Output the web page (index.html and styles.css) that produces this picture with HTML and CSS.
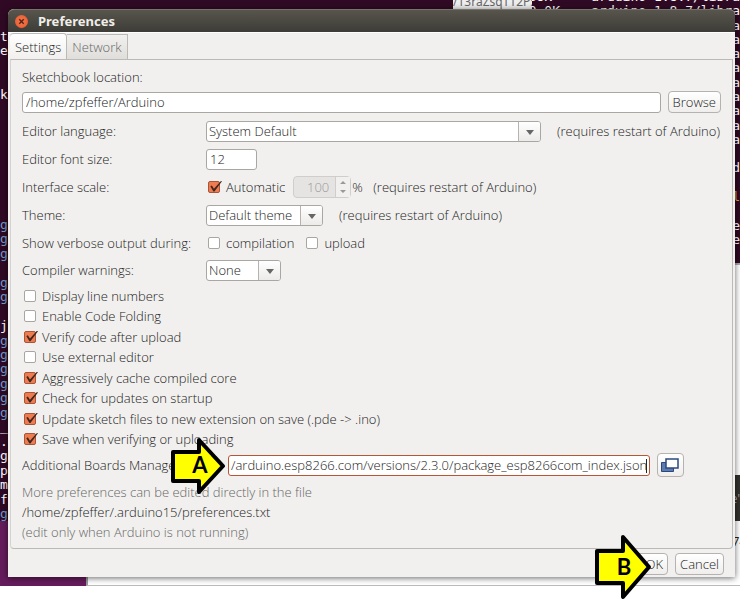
FILE: index.html
```html
<!DOCTYPE html>
<html lang="en">
<head>
<meta charset="utf-8">
<title>Preferences</title>
<link rel="stylesheet" href="styles.css">
</head>
<body>
<div class="desktop">
  <div class="terminal terminal-left">
    <span>t</span><span>e</span><span></span><span></span><span>k</span><span></span><span></span><span></span><span></span><span></span><span></span><span></span><span></span><span class="dir">g</span><span class="dir">g</span><span class="dir">g</span><span></span><span class="dir">g</span><span class="dir">g</span><span></span><span>j</span><span class="dir">g</span><span class="dir">g</span><span class="dir">g</span><span class="dir">g</span><span class="dir">g</span><span class="dir">g</span><span>_</span><span>.</span><span>g</span><span>p</span><span>m</span><span>f</span><span class="dir">g</span>
  </div>
  <div class="back-window"></div>
  <div class="terminal terminal-right">
    <span>SOK     arduino-1.8.7/libra</span><span>0.0K    arduino-1.8.7/libra</span><span>a</span><span>a</span><span>a</span><span>a</span><span>a</span><span>a</span><span>a</span><span>a</span><span>a</span><span></span><span>d</span><span></span><span class="warn">l</span><span></span><span>e</span><span>e</span>
  </div>
  <div class="tooltip-edge">/13raZsqT12PS</div>
  <div class="dark-edge">e'</div>
  <div class="number-edge">74</div>

  <main class="dialog">
    <header class="titlebar">
      <button class="close" type="button" aria-label="Close"><svg viewBox="0 0 14 14"><path d="M4.6 4.6l4.8 4.8M9.4 4.6l-4.8 4.8"/></svg></button>
      <h1>Preferences</h1>
    </header>
    <nav class="tabs">
      <button class="tab active" type="button">Settings</button>
      <button class="tab" type="button">Network</button>
    </nav>
    <form class="panel">
      <label class="heading" for="sketchbook">Sketchbook location:</label>
      <div class="location">
        <input class="text" id="sketchbook" type="text" value="/home/zpfeffer/Arduino">
        <button class="btn" type="button">Browse</button>
      </div>
      <div class="row">
        <label class="name" for="language">Editor language:</label>
        <div class="combo language"><select id="language"><option>System Default</option></select></div>
        <span class="hint">(requires restart of Arduino)</span>
      </div>
      <div class="row">
        <label class="name" for="size">Editor font size:</label>
        <input class="text size" id="size" type="text" value="12">
      </div>
      <div class="row">
        <span class="name">Interface scale:</span>
        <label class="check"><input type="checkbox" checked>Automatic</label>
        <div class="spinner">
          <input type="text" value="100" aria-label="Interface scale" disabled>
          <svg viewBox="0 0 14 20"><path d="M4 7l3-3 3 3zM4 13l3 3 3-3z"/></svg>
        </div>
        <span class="percent">%</span>
        <span>(requires restart of Arduino)</span>
      </div>
      <div class="row">
        <label class="name" for="theme">Theme:</label>
        <div class="combo theme"><select id="theme"><option>Default theme</option></select></div>
        <span class="hint">(requires restart of Arduino)</span>
      </div>
      <div class="row">
        <span class="name">Show verbose output during:</span>
        <label class="check"><input type="checkbox">compilation</label>
        <label class="check second"><input type="checkbox">upload</label>
      </div>
      <div class="row short">
        <label class="name" for="warnings">Compiler warnings:</label>
        <div class="combo warnings"><select id="warnings"><option>None</option></select></div>
      </div>
      <div class="checks">
        <label class="check"><input type="checkbox">Display line numbers</label>
        <label class="check"><input type="checkbox">Enable Code Folding</label>
        <label class="check"><input type="checkbox" checked>Verify code after upload</label>
        <label class="check"><input type="checkbox">Use external editor</label>
        <label class="check"><input type="checkbox" checked>Aggressively cache compiled core</label>
        <label class="check"><input type="checkbox" checked>Check for updates on startup</label>
        <label class="check"><input type="checkbox" checked>Update sketch files to new extension on save (.pde -&gt; .ino)</label>
        <label class="check"><input type="checkbox" checked>Save when verifying or uploading</label>
      </div>
      <div class="boards">
        <label for="boards">Additional Boards Manager URLs:</label>
        <div class="caret-field"><input class="text" id="boards" type="text" value="/arduino.esp8266.com/versions/2.3.0/package_esp8266com_index.json"></div>
        <button class="btn expand" type="button" aria-label="Edit URLs"><svg viewBox="0 0 20 16"><path class="rear" d="M1.5 5.500h12v9h-12z"/><path class="front" d="M6 2h12v9H6z"/></svg></button>
      </div>
      <div class="notes">
        <p>More preferences can be edited directly in the file</p>
        <p class="path">/home/zpfeffer/.arduino15/preferences.txt</p>
        <p>(edit only when Arduino is not running)</p>
      </div>
    </form>
    <footer class="actions">
      <button class="btn ok" type="button">OK</button>
      <button class="btn" type="button">Cancel</button>
    </footer>
  </main>

  <svg class="arrow arrow-a" viewBox="0 0 58 60"><path d="M4 16h26V4l24 26-24 26V45H4z"/><text x="31" y="37">A</text></svg>
  <svg class="arrow arrow-b" viewBox="0 0 60 68"><path d="M4 18h26V4l26 30-26 30V50H4z"/><text x="31" y="42">B</text></svg>
</div>
</body>
</html>
```

FILE: styles.css
```css
* { box-sizing: border-box; }
body {
  margin: 0;
  min-height: 100vh;
  background: #fff;
  color: #222;
  font: 300 13px/20px "Open Sans", "Noto Sans", sans-serif;
}
button, input, select { font: inherit; color: inherit; margin: 0; }

/* desktop behind the dialog */
.desktop {
  position: relative;
  padding: 9px 5px 9px 8px;
  background: #651c5c;
}
.terminal {
  position: absolute;
  display: flex;
  flex-direction: column;
  justify-content: space-between;
  background: #300a24;
  color: #fff;
  font: 13px/14px "DejaVu Sans Mono", monospace;
  white-space: pre;
}
.terminal span { height: 14px; }
.terminal .dir { color: #729fcf; }
.terminal .warn { color: #e9a33c; }
.terminal-left { left: 0; top: 0; width: 100%; height: 521px; padding-top: 30px; }
.terminal-right { right: 0; top: -10px; width: 240px; height: 275px; padding-bottom: 16px; border-bottom: 2px solid #aaa; align-items: flex-end; }
.back-window { position: absolute; left: 86px; right: 0; top: 265px; bottom: 0; background: #fff; border-left: 2px solid #999; border-bottom: 1px solid #bbb; }
.tooltip-edge { position: absolute; left: 453px; top: -8px; width: 79px; height: 17px; background: #eee; color: #666; font: 12px/20px "Noto Sans", sans-serif; overflow: hidden; }
.dark-edge { position: absolute; right: 0; top: 475px; width: 20px; height: 46px; background: #33322e; color: #ddd; text-align: right; line-height: 46px; }
.number-edge { position: absolute; right: 0; top: 531px; width: 8px; overflow: hidden; font-weight: 400; }

/* dialog */
.dialog { position: relative; background: #f1f0ee; border-radius: 6px 6px 0 0; box-shadow: 0 1px 6px rgba(0, 0, 0, .6); }
.titlebar {
  display: flex;
  align-items: center;
  gap: 10px;
  height: 23px;
  padding: 0 7px;
  border-top: 1px solid #75736b;
  border-radius: 6px 6px 0 0;
  background: linear-gradient(#57554c, #3d3c37);
}
.titlebar h1 { margin: 0; color: #f0eee8; font: 700 13px/20px "Noto Sans", sans-serif; }
.close { width: 13px; height: 13px; padding: 0; border: 0; border-radius: 50%; background: radial-gradient(#f37a4d, #e9552d); }
.close svg { display: block; width: 13px; height: 13px; fill: none; stroke: #552211; stroke-width: 1.5; }
.tabs { display: flex; align-items: flex-end; height: 27px; padding-left: 2px; border-top: 1px solid #fff; }
.tab { height: 25px; padding: 0 5px; border: 1px solid #bcbab7; border-left: 0; border-bottom: 0; background: linear-gradient(#f1f0ee, #dfdedb); color: #666; }
.tab.active { height: 26px; background: linear-gradient(#fff, #f1f0ee); color: inherit; border-radius: 4px 4px 0 0; }
.panel { margin: 0 2px; padding: 7px 11px 6px; border: 1px solid #bcbab7; border-left-color: #d5d3d0; border-radius: 0 0 4px 4px; }
.heading { display: block; }
.location { display: flex; align-items: center; gap: 7px; margin: 4px 0; }
.text { min-width: 0; height: 21px; padding: 0 3px; border: 1px solid #aaa7a3; border-radius: 3px; background: #fff; outline: 0; }
.location .text { flex: 1; }
.btn { height: 22px; padding: 0 4px; border: 1px solid #b5b2af; border-radius: 4px; background: linear-gradient(#fff, #efeeec); line-height: 18px; }
.row { display: flex; align-items: center; height: 28px; white-space: nowrap; }
.row.short { height: 26px; }
.name { flex: none; width: 184px; }
.hint { margin-left: 16px; }
.combo { position: relative; height: 21px; border: 1px solid #aaa7a3; border-radius: 3px; background: #fff; }
.combo select { display: block; width: 100%; height: 19px; padding: 0 22px 0 2px; border: 0; background: none; appearance: none; outline: 0; line-height: 18px; }
.combo::before { content: ""; position: absolute; inset: 0 0 0 auto; width: 21px; border-left: 1px solid #b5b2af; border-radius: 0 2px 2px 0; background: linear-gradient(#fff, #ecebe9); pointer-events: none; }
.combo::after { content: ""; position: absolute; right: 6px; top: 8px; border: 4px solid transparent; border-top: 5px solid #666; border-bottom: 0; pointer-events: none; }
.language { flex: 1; max-width: 335px; }
.theme { width: 117px; }
.warnings { width: 75px; }
.size { width: 51px; }
.check { display: flex; align-items: center; gap: 6px; padding-left: 2px; white-space: nowrap; }
.check.second { margin-left: 10px; }
.check input { position: relative; flex: none; width: 12px; height: 12px; border: 1px solid #a9a6a2; border-radius: 2px; background: #fff; appearance: none; }
.check input:checked { border-color: #a8553a; background: #ef7c50; }
.check input:checked::after { content: ""; position: absolute; left: 0; top: -1px; width: 13px; height: 11px; background: #40271e; clip-path: polygon(10% 48%, 22% 40%, 38% 70%, 92% 0, 100% 3%, 42% 95%, 34% 95%); }
.spinner { display: flex; width: 58px; height: 22px; margin-left: 8px; border: 1px solid #d0cecb; border-radius: 4px; background: #e5e4e2; }
.spinner input { flex: 1; width: 42px; min-width: 0; padding: 0 6px 0 0; border: 0; border-right: 1px solid #d0cecb; background: none; color: #999; text-align: right; }
.spinner svg { width: 14px; height: 20px; background: #f1f0ee; fill: #999; }
.percent { width: 22px; padding-left: 1px; }
.checks { display: flex; flex-direction: column; justify-content: space-between; align-items: flex-start; min-height: 163px; margin-top: 3px; }
.boards { display: flex; align-items: center; height: 26px; margin-top: 3px; white-space: nowrap; }
.boards > label { flex: none; width: 206px; overflow: hidden; }
.caret-field { position: relative; flex: 1; max-width: 422px; }
.caret-field::after { content: ""; position: absolute; right: 3px; top: 4px; width: 1px; height: 14px; background: #222; }
.caret-field .text { display: block; width: 100%; padding: 0 2px; border: 1px solid #b85536; }
.expand { width: 27px; height: 24px; margin-left: 7px; padding: 0 2px; }
.expand svg { display: block; width: 20px; height: 16px; }
.rear { fill: #5c7bb0; stroke: #2e4778; }
.front { fill: #fff; stroke: #2c4a80; stroke-width: 1.5; }
.notes { margin-top: 4px; color: #666; }
.notes p { margin: 0; }
.notes .path { color: #222; }
.actions { display: flex; justify-content: flex-end; gap: 7px; padding: 4px 11px 2px; }
.ok { width: 54px; text-align: right; }

/* callouts */
.arrow { position: absolute; fill: #ff0; stroke: #000; stroke-width: 4; stroke-linejoin: round; }
.arrow text { fill: #000; stroke: none; font: 700 22px Lato, sans-serif; text-anchor: middle; }
.arrow-a { left: 169px; top: 436px; width: 58px; height: 60px; }
.arrow-b { left: 593px; top: 533px; width: 60px; height: 68px; }
```
